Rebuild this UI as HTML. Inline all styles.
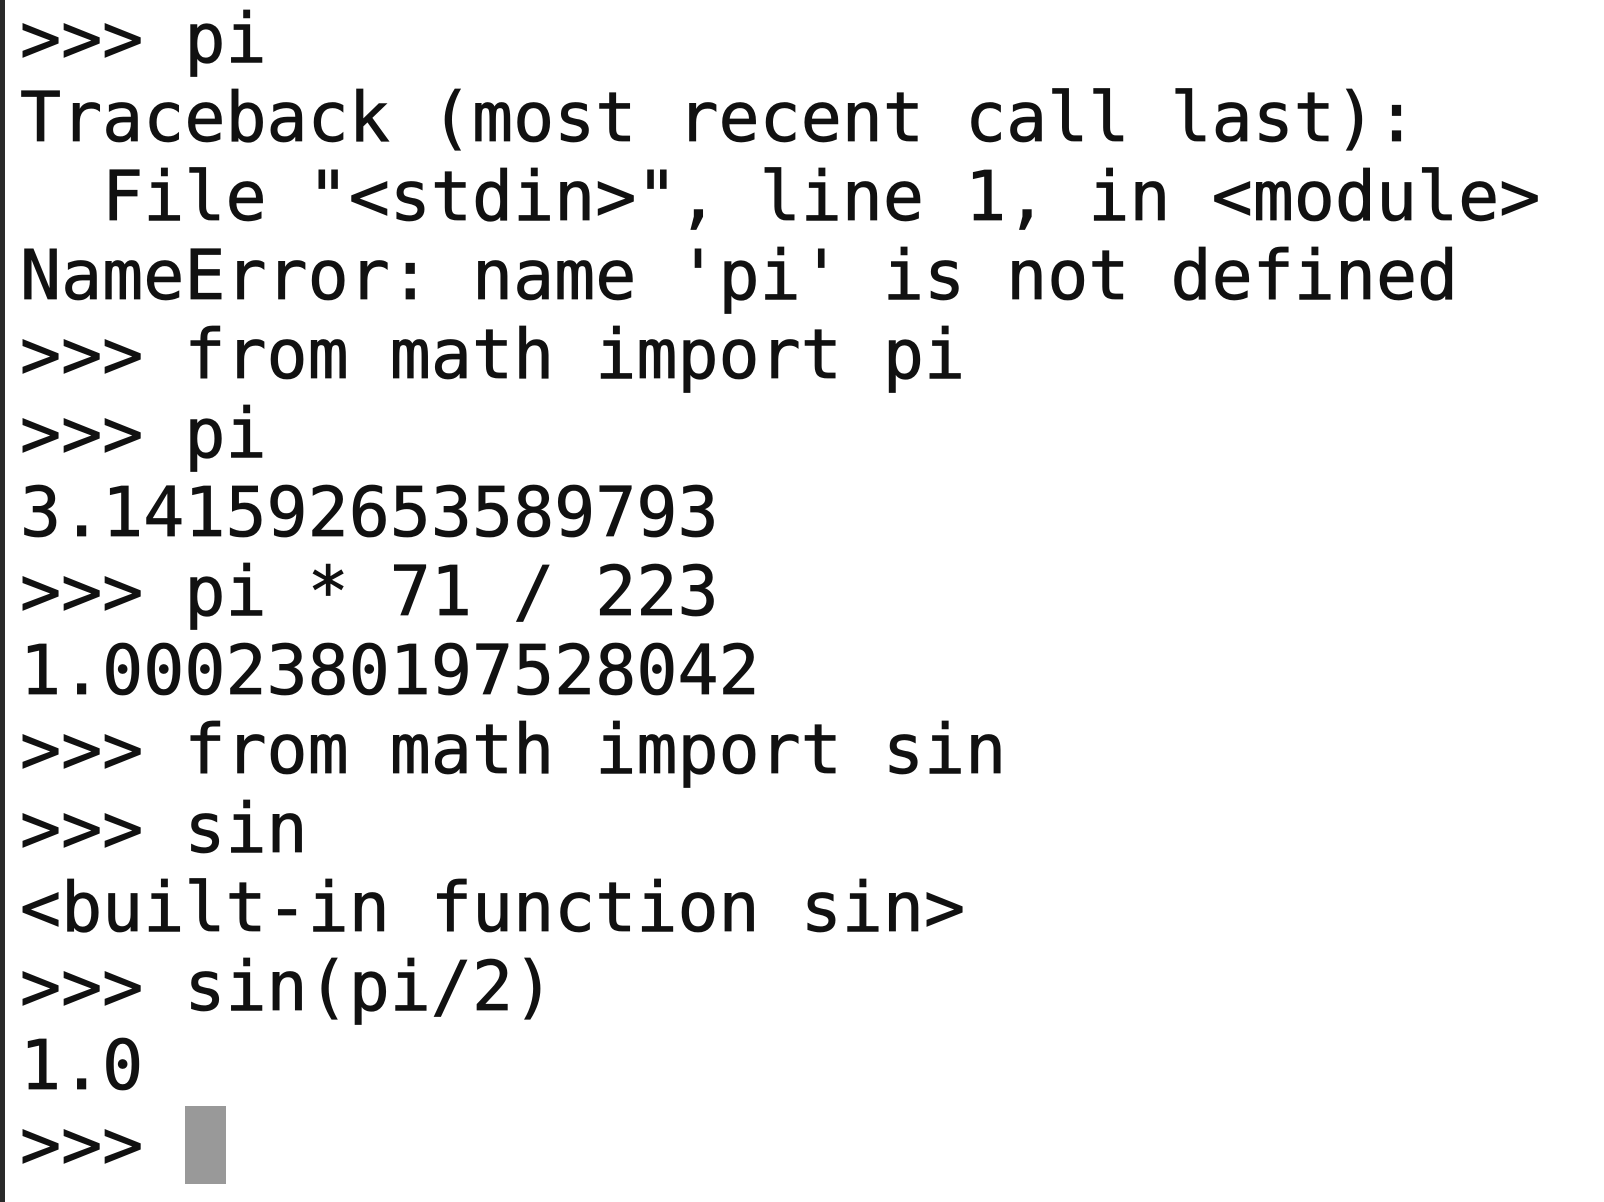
<!DOCTYPE html>
<html><head><meta charset="utf-8"><style>
html,body{margin:0;padding:0;background:#fff;width:1604px;height:1202px;overflow:hidden}
.b{position:absolute;left:0;top:0;width:5px;height:1202px;background:#2a2a2a}
pre{position:absolute;left:20px;top:0;margin:0;font-family:"DejaVu Sans Mono","Liberation Mono",monospace;font-size:68.25px;line-height:79px;color:#111;-webkit-text-stroke:0.8px #111}
.c{position:absolute;left:185px;top:1106px;width:41px;height:78px;background:#999}
</style></head><body><div class="b"></div><pre>&gt;&gt;&gt; pi
Traceback (most recent call last):
  File "&lt;stdin&gt;", line 1, in &lt;module&gt;
NameError: name 'pi' is not defined
&gt;&gt;&gt; from math import pi
&gt;&gt;&gt; pi
3.141592653589793
&gt;&gt;&gt; pi * 71 / 223
1.0002380197528042
&gt;&gt;&gt; from math import sin
&gt;&gt;&gt; sin
&lt;built-in function sin&gt;
&gt;&gt;&gt; sin(pi/2)
1.0
&gt;&gt;&gt; </pre><div class="c"></div></body></html>
